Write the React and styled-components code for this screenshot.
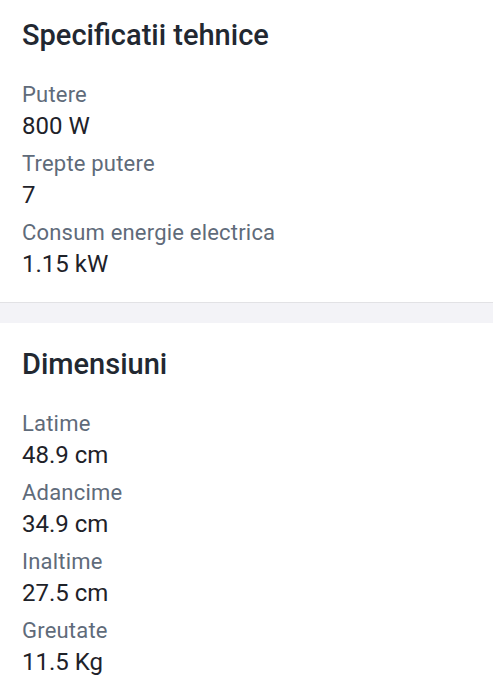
import React from 'react';
import styled, { createGlobalStyle } from 'styled-components';

const GlobalStyle = createGlobalStyle`
  body {
    margin: 0;
    background: #ffffff;
    font-family: Roboto, "Noto Sans", sans-serif;
  }
`;

const Page = styled.div`
  width: 493px;
  display: flex;
  flex-direction: column;
`;

const Section = styled.section`
  padding: ${(p) => (p.first ? '18px' : '24px')} 22px 15px;
  background: #ffffff;
`;

const Title = styled.h2`
  margin: 0 0 28px;
  font-size: 29px;
  line-height: 34px;
  font-weight: 500;
  color: #222831;
`;

const SpecList = styled.dl`
  margin: 0;
  display: flex;
  flex-direction: column;
`;

const Label = styled.dt`
  font-size: 22px;
  line-height: 30px;
  letter-spacing: 0.2px;
  color: #5f6b7a;
`;

const Value = styled.dd`
  margin: 0 0 7px;
  font-size: 24px;
  line-height: 32px;
  color: #1e2229;
`;

const Divider = styled.div`
  height: 20px;
  background: #f3f3f7;
  border-top: 1px solid #e2e2e5;
`;

const sections = [
  {
    title: 'Specificatii tehnice',
    specs: [
      ['Putere', '800 W'],
      ['Trepte putere', '7'],
      ['Consum energie electrica', '1.15 kW'],
    ],
  },
  {
    title: 'Dimensiuni',
    specs: [
      ['Latime', '48.9 cm'],
      ['Adancime', '34.9 cm'],
      ['Inaltime', '27.5 cm'],
      ['Greutate', '11.5 Kg'],
    ],
  },
];

function App() {
  return (
    <Page>
      <GlobalStyle />
      {sections.map((section, i) => (
        <React.Fragment key={section.title}>
          {i > 0 && <Divider />}
          <Section first={i === 0}>
            <Title>{section.title}</Title>
            <SpecList>
              {section.specs.map(([label, value]) => (
                <React.Fragment key={label}>
                  <Label>{label}</Label>
                  <Value>{value}</Value>
                </React.Fragment>
              ))}
            </SpecList>
          </Section>
        </React.Fragment>
      ))}
    </Page>
  );
}

export default App;
